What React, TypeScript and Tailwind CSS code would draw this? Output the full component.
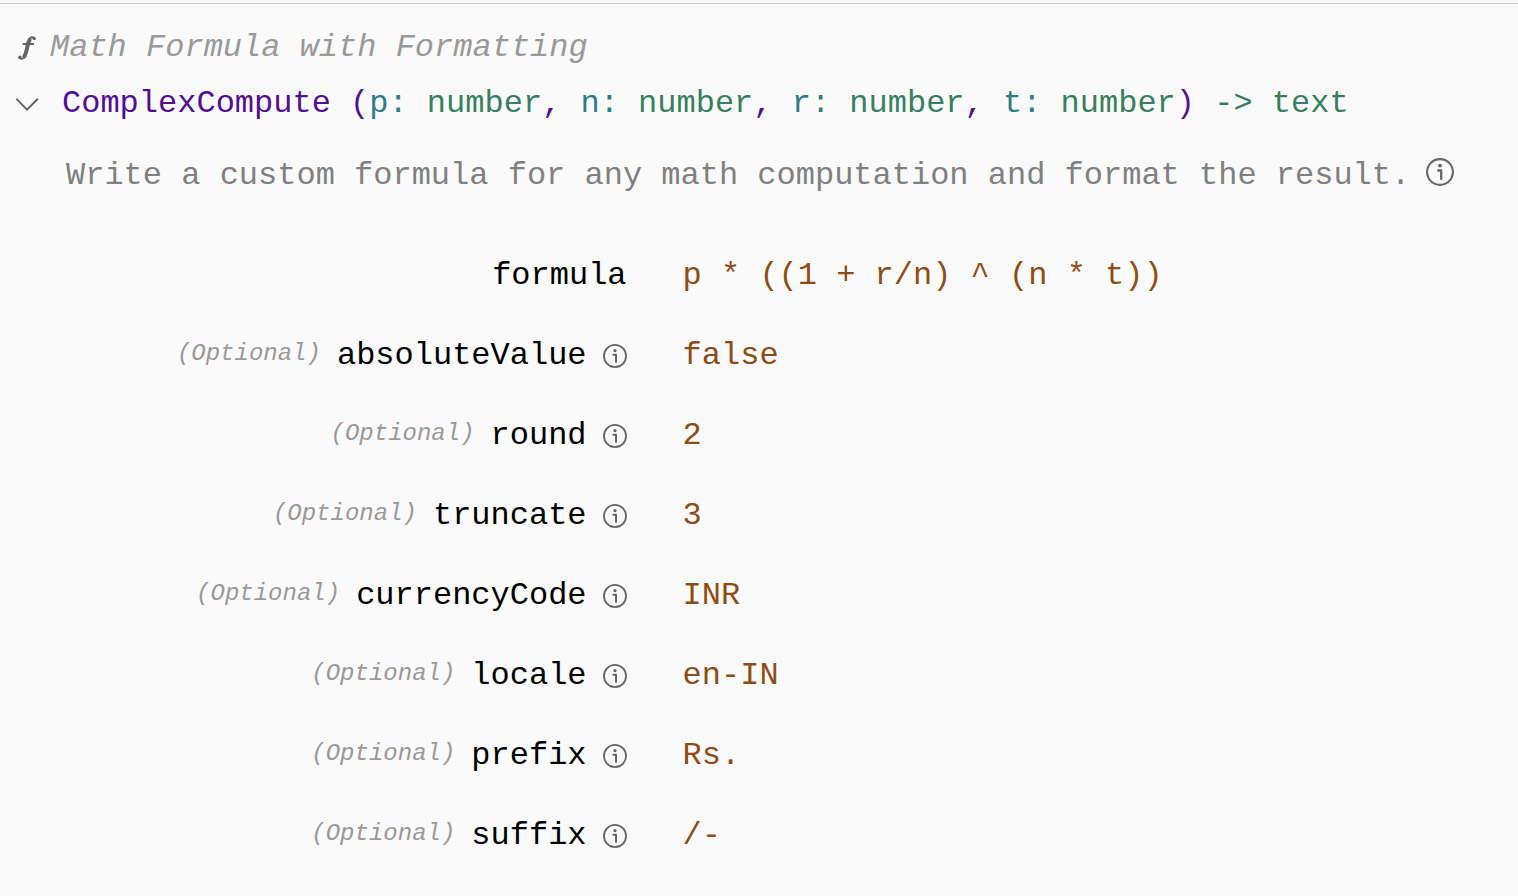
import React from "react";

type Param = { name: string; type: string };
type Field = { name: string; value: string; optional: boolean };

const params: Param[] = [
  { name: "p", type: "number" },
  { name: "n", type: "number" },
  { name: "r", type: "number" },
  { name: "t", type: "number" },
];

const fields: Field[] = [
  { name: "formula", value: "p * ((1 + r/n) ^ (n * t))", optional: false },
  { name: "absoluteValue", value: "false", optional: true },
  { name: "round", value: "2", optional: true },
  { name: "truncate", value: "3", optional: true },
  { name: "currencyCode", value: "INR", optional: true },
  { name: "locale", value: "en-IN", optional: true },
  { name: "prefix", value: "Rs.", optional: true },
  { name: "suffix", value: "/-", optional: true },
];

function InfoIcon({ className }: { className: string }) {
  return (
    <svg viewBox="0 0 28 28" fill="none" stroke="#666666" className={className} aria-hidden="true">
      <circle cx="14" cy="14" r="12.9" strokeWidth="2.1" />
      <circle cx="14" cy="7.6" r="1.9" fill="#666666" stroke="none" />
      <path d="M12.2 12.5h3v8.6" strokeWidth="2.3" strokeLinecap="round" strokeLinejoin="round" />
    </svg>
  );
}

function FunctionIcon() {
  return (
    <svg viewBox="0 0 18 24" fill="none" stroke="#666666" strokeLinecap="round" className="h-6 w-[18px] shrink-0" aria-hidden="true">
      <path d="M11.6 4C10.2 6 9.8 8.5 9.2 11.4C8.4 15 8 18 6.4 20.2" strokeWidth="4" />
      <path d="M16.4 2C15 0.7 12.6 1 11 3.4" strokeWidth="2" />
      <circle cx="16.2" cy="2.6" r="1.7" fill="#666666" stroke="none" />
      <path d="M5.4 8h9.8" strokeWidth="2" />
      <path d="M1.6 22C3.2 23.4 5.4 22.8 7 20.4" strokeWidth="2" />
      <circle cx="1.9" cy="21.3" r="1.7" fill="#666666" stroke="none" />
    </svg>
  );
}

function FieldRow({ field }: { field: Field }) {
  return (
    <div className="grid min-h-20 grid-cols-[3fr_4fr] items-center gap-14">
      <dt className="flex items-center justify-end gap-4 whitespace-nowrap">
        {field.optional && (
          <span className="pb-1 text-2xl text-[#999999] italic">(Optional)</span>
        )}
        <span className="text-black">{field.name}</span>
        {field.optional && (
          <button type="button" aria-label={`About ${field.name}`} className="shrink-0">
            <InfoIcon className="block size-6" />
          </button>
        )}
      </dt>
      <dd className="text-[#8f4d14]">{field.value}</dd>
    </div>
  );
}

export default function App() {
  return (
    <main className="min-h-screen bg-[#fafafa] pt-[3px] font-['Liberation_Mono',monospace] text-[32px] leading-10">
      <section className="border-t border-[#cccccc] pt-6 pb-5">
        <header className="flex items-center gap-3.5 px-[18px] text-[#999999]">
          <FunctionIcon />
          <h1 className="italic">Math Formula with Formatting</h1>
        </header>

        <div className="mt-4 flex items-center gap-[22px] px-4">
          <button type="button" aria-label="Collapse ComplexCompute" aria-expanded="true" className="shrink-0">
            <svg viewBox="0 0 24 14" fill="none" stroke="#666666" strokeWidth="2" className="block h-3.5 w-6" aria-hidden="true">
              <path d="M0.3 1.7L11 12.6L21.9 1.7" />
            </svg>
          </button>
          <h2 className="text-[#550d94]">
            ComplexCompute (
            {params.map((param, i) => (
              <React.Fragment key={param.name}>
                {i > 0 && ", "}
                <span className="text-[#2f7d86]">{param.name}:</span>{" "}
                <span className="text-[#37805f]">{param.type}</span>
              </React.Fragment>
            ))}
            ) <span className="text-[#37805f]">-&gt; text</span>
          </h2>
        </div>

        <div className="mt-8 flex items-center gap-4 pr-8 pl-[66px]">
          <p className="text-[#808080]">
            Write a custom formula for any math computation and format the result.
          </p>
          <button type="button" aria-label="About this formula" className="shrink-0 pb-2">
            <InfoIcon className="block size-7" />
          </button>
        </div>

        <dl className="mt-10">
          {fields.map((field) => (
            <FieldRow key={field.name} field={field} />
          ))}
        </dl>
      </section>
    </main>
  );
}
